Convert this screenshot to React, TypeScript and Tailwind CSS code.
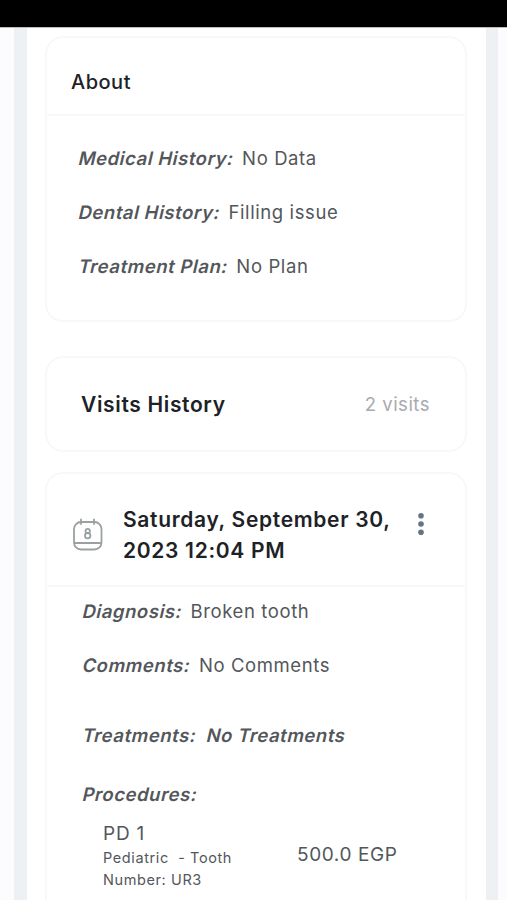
import type { ReactNode } from 'react';
import clsx from 'clsx';

const procedures = [
    { name: 'PD 1', category: 'Pediatric', tooth: 'UR3', price: '500.0 EGP' },
];

function Card({ className, children }: { className?: string; children: ReactNode }) {
    return (
        <section className={clsx('rounded-[18px] border-2 border-[#f7f8f8] bg-white', className)}>
            {children}
        </section>
    );
}

// Sheared upright letters, so the "a" keeps its two-storey form
function Slanted({ className, children }: { className?: string; children: ReactNode }) {
    return (
        <span className={clsx('inline-block -skew-x-[13deg] font-semibold tracking-[0.55px]', className)}>
            {children}
        </span>
    );
}

function Field({ label, value, slanted }: { label: string; value?: string; slanted?: boolean }) {
    return (
        <p className="h-[54px] whitespace-nowrap text-[18.5px] leading-[54px] tracking-[0.6px] text-[#53575b]">
            <Slanted>{label}:</Slanted>
            {value && (slanted ? <Slanted className="ml-[10px]">{value}</Slanted> : <span className="ml-2">{value}</span>)}
        </p>
    );
}

function CalendarIcon() {
    return (
        <svg width="32" height="34" viewBox="0 0 32 34" fill="none" stroke="#9ba1a3" strokeWidth="1.8" strokeLinecap="round">
            <rect x="2" y="4" width="27.5" height="27.5" rx="7" />
            <path d="M9 1.5v4.5M22 1.5v4.5M2.5 25h26.5" />
            <circle cx="15.7" cy="13" r="2.2" />
            <circle cx="15.7" cy="17.7" r="2.7" />
        </svg>
    );
}

function MoreIcon() {
    return (
        <svg width="8" height="24" viewBox="0 0 8 24" fill="#667481">
            <circle cx="4" cy="3.7" r="2.8" />
            <circle cx="4" cy="12" r="2.8" />
            <circle cx="4" cy="20.3" r="2.8" />
        </svg>
    );
}

export default function App() {
    return (
        <div className="flex h-[900px] w-[507px] flex-col overflow-hidden bg-[#fcfcfe] font-['Inter',sans-serif]">
            <div className="h-7 shrink-0 border-b border-[#bdbdbd] bg-black" />

            <main className="ml-[14px] mr-[9px] min-h-0 flex-1 border-l-[13px] border-r-[12px] border-[#edf1f3] bg-white pl-[18px] pr-[19px] pt-2">
                {/* About */}
                <Card className="h-[286px]">
                    <h2 className="h-[78px] border-b-2 border-[#f7f8f8] pl-6 pt-[5px] text-[20px] font-medium leading-[78px] tracking-[0.5px] text-[#1d2226]">
                        About
                    </h2>
                    <div className="pl-8 pt-[15px]">
                        <Field label="Medical History" value="No Data" />
                        <Field label="Dental History" value="Filling issue" />
                        <Field label="Treatment Plan" value="No Plan" />
                    </div>
                </Card>

                {/* Visits summary */}
                <Card className="mt-[34px] flex h-[96px] items-center justify-between pl-[34px] pr-[35px] pt-px">
                    <h2 className="text-[21px] font-semibold tracking-[0.65px] text-[#1d2226]">Visits History</h2>
                    <span className="text-[18.5px] tracking-[0.5px] text-[#a7abaf]">2 visits</span>
                </Card>

                {/* Visit */}
                <Card className="mt-5 h-[480px]">
                    <header className="flex h-[113px] border-b-2 border-[#f7f8f8] pl-[25px]">
                        <div className="mt-[44px] w-[51px]">
                            <CalendarIcon />
                        </div>
                        <h3 className="mt-[30px] w-[294px] whitespace-nowrap text-[21px] font-semibold leading-[31px] tracking-[0.68px] text-[#1d2226]">
                            Saturday, September 30,
                            <br />
                            2023 12:04 PM
                        </h3>
                        <button className="mt-[38px] h-6 w-2" aria-label="More options">
                            <MoreIcon />
                        </button>
                    </header>
                    <div className="-mt-[3px] pl-9">
                        <Field label="Diagnosis" value="Broken tooth" />
                        <Field label="Comments" value="No Comments" />
                        <div className="mt-4">
                            <Field label="Treatments" value="No Treatments" slanted />
                        </div>
                        <div className="mt-[5px]">
                            <Field label="Procedures" />
                        </div>
                        {procedures.map(p => (
                            <div key={p.name} className="flex items-center pl-5 text-[#53575b]">
                                <div className="-mb-px w-[194px]">
                                    <p className="text-[19px] leading-[26px] tracking-[0.8px]">{p.name}</p>
                                    <p className="whitespace-pre text-[14.5px] leading-[22px] tracking-[0.6px]">
                                        {`${p.category}  - Tooth\nNumber: ${p.tooth}`}
                                    </p>
                                </div>
                                <span className="text-[19px] tracking-[0.6px]">{p.price}</span>
                            </div>
                        ))}
                    </div>
                </Card>
            </main>
        </div>
    );
}
